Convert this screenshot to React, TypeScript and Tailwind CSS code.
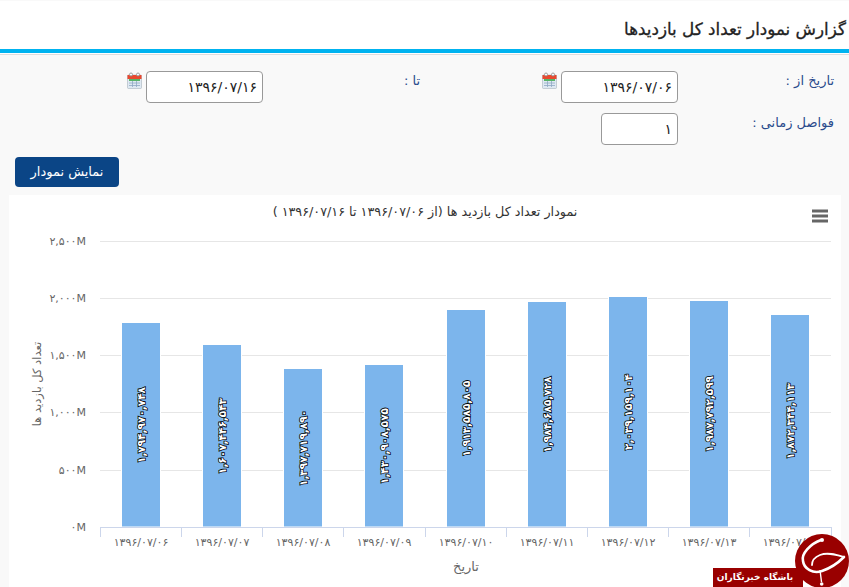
const font = { fontFamily: '"DejaVu Sans", sans-serif' };

const bars = [
  { x: 113, top: 323, value: "۱,۷۹۴,۹۷۰,۷۴۸", date: "۱۳۹۶/۰۷/۰۶" },
  { x: 194, top: 345, value: "۱,۶۰۷,۴۴۶,۵۴۳", date: "۱۳۹۶/۰۷/۰۷" },
  { x: 275, top: 369, value: "۱,۳۹۷,۷۱۹,۸۹۰", date: "۱۳۹۶/۰۷/۰۸" },
  { x: 356, top: 365, value: "۱,۴۳۰,۹۰۸,۵۷۵", date: "۱۳۹۶/۰۷/۰۹" },
  { x: 438, top: 310, value: "۱,۹۱۳,۵۸۵,۸۰۵", date: "۱۳۹۶/۰۷/۱۰" },
  { x: 519, top: 302, value: "۱,۹۸۴,۶۸۵,۷۲۸", date: "۱۳۹۶/۰۷/۱۱" },
  { x: 600, top: 297, value: "۲,۰۳۹,۱۵۹,۱۰۴", date: "۱۳۹۶/۰۷/۱۲" },
  { x: 681, top: 301, value: "۱,۹۸۷,۷۹۲,۵۹۹", date: "۱۳۹۶/۰۷/۱۳" },
  { x: 762, top: 315, value: "۱,۸۷۲,۳۴۴,۱۱۳", date: "۱۳۹۶/۰۷/۱۴" },
];

const ticks = [
  { y: 46, label: "۲,۵۰۰M" },
  { y: 103, label: "۲,۰۰۰M" },
  { y: 160, label: "۱,۵۰۰M" },
  { y: 217, label: "۱,۰۰۰M" },
  { y: 275, label: "۵۰۰M" },
  { y: 332, label: "۰M" },
];

function CalendarIcon() {
  return (
    <svg width="15" height="17" viewBox="0 0 15 17" className="shrink-0">
      <rect x="0.5" y="3" width="14" height="13.5" rx="1" fill="#dfe9f2" stroke="#9aa7b3" strokeWidth="0.5" />
      <rect x="0.5" y="3" width="14" height="4" fill="#e8492f" />
      <rect x="2" y="7" width="11" height="2" fill="#58b368" />
      <path d="M2 11h11M2 13.5h11M5.5 9v6M9.5 9v6" stroke="#8fa8c4" strokeWidth="0.8" />
      <circle cx="4" cy="2.5" r="1.5" fill="#fff" stroke="#8a8a8a" strokeWidth="0.8" />
      <circle cx="11" cy="2.5" r="1.5" fill="#fff" stroke="#8a8a8a" strokeWidth="0.8" />
    </svg>
  );
}

function DateField({ value }: { value: string }) {
  return (
    <div className="flex items-start gap-[4px]">
      <input
        readOnly
        value={value}
        dir="rtl"
        className="h-[32px] w-[117px] rounded-[4px] border border-[#999999] bg-white px-[5px] text-[14px] text-[#222222] outline-none"
        style={font}
      />
      <div className="pt-[1px]">
        <CalendarIcon />
      </div>
    </div>
  );
}

function Chart() {
  return (
    <svg width="832" height="392" viewBox="0 0 832 392" className="block" style={font}>
      <text x="416" y="21" textAnchor="middle" direction="rtl" fontSize="12.75" fill="#333333">
        نمودار تعداد کل بازدید ها (از ۱۳۹۶/۰۷/۰۶ تا ۱۳۹۶/۰۷/۱۶ )
      </text>
      <path d="M803 16h16M803 21h16M803 26h16" stroke="#666666" strokeWidth="3" />

      {ticks.slice(0, 5).map((t) => (
        <line key={t.y} x1="91" x2="822" y1={t.y + 0.5} y2={t.y + 0.5} stroke="#e6e6e6" />
      ))}
      {ticks.map((t) => (
        <text key={t.label} x="77" y={t.y + 4} textAnchor="end" fontSize="11" fill="#666666">
          {t.label}
        </text>
      ))}

      {bars.map((b) => {
        const top = b.top - 195;
        const center = (top + 332) / 2;
        return (
          <g key={b.date}>
            <rect x={b.x - 0.5} y={top - 0.5} width="39" height={332 - top + 0.5} fill="#7cb5ec" stroke="#ffffff" />
            <text
              x={b.x + 19}
              y={center}
              textAnchor="middle"
              fontSize="10.5"
              fontWeight="700"
              fill="#ffffff"
              stroke="#000000"
              strokeWidth="1.6"
              transform={`rotate(-90 ${b.x + 19} ${center}) translate(0 4)`}
              style={{ paintOrder: "stroke" }}
            >
              {b.value}
            </text>
          </g>
        );
      })}

      <line x1="91" x2="822" y1="332.5" y2="332.5" stroke="#ccd6eb" />
      {[91, 172, 253, 334, 416, 497, 578, 659, 740, 822].map((x) => (
        <line key={x} x1={x + 0.5} x2={x + 0.5} y1="332" y2="342" stroke="#ccd6eb" />
      ))}
      {bars.map((b) => (
        <text key={b.date} x={b.x + 19} y="351" textAnchor="middle" fontSize="11" fill="#666666">
          {b.date}
        </text>
      ))}

      <text x="457" y="376" textAnchor="middle" direction="rtl" fontSize="13" fill="#666666">
        تاریخ
      </text>
      <text x="0" y="0" textAnchor="middle" direction="rtl" fontSize="11.5" fill="#666666" transform="translate(32 189) rotate(-90)">
        تعداد کل بازدید ها
      </text>
    </svg>
  );
}

function Watermark() {
  return (
    <div className="pointer-events-none absolute bottom-0 right-0 h-[60px] w-[136px]">
      <div className="absolute bottom-0 left-0 flex h-[19px] w-[90px] items-center justify-center bg-[#990000]">
        <span dir="rtl" className="pr-[6px] text-[9px] font-bold text-white" style={font}>
          باشگاه خبرنگاران
        </span>
      </div>
      <svg width="54" height="54" viewBox="0 0 54 54" className="absolute right-0 top-[7px]">
        <circle cx="27" cy="27" r="27" fill="#990000" />
        <path
          d="M26 6C15 10 6 20 8 27C9 35 18 40 27 37C36 34 42 30 49 23"
          fill="none"
          stroke="#ffffff"
          strokeWidth="2.6"
          strokeLinecap="round"
        />
        <path
          d="M49 23C42 21 33 18 25 21C20 23 17 27 17 31"
          fill="none"
          stroke="#ffffff"
          strokeWidth="1.8"
          strokeLinecap="round"
        />
        <path d="M25 36L26.5 48" fill="none" stroke="#ffffff" strokeWidth="1.4" />
        <circle cx="27" cy="6" r="2" fill="#ffffff" />
        <circle cx="26.7" cy="50" r="1.8" fill="#ffffff" />
      </svg>
    </div>
  );
}

export default function App() {
  return (
    <div className="relative h-[587px] w-[849px] overflow-hidden bg-[#f9f9f9]" style={font}>
      <header className="mt-[1px] flex h-[48px] items-center justify-end bg-white pr-[3px] pt-[10px]">
        <h1 dir="rtl" className="text-[16.75px] font-normal text-[#222222] [-webkit-text-stroke:0.3px_#222222]">
          گزارش نمودار تعداد کل بازدیدها
        </h1>
      </header>
      <div className="h-[4px] bg-[#00b3f0]" />
      <div className="h-[1px] bg-white" />
      <div className="h-[1px] bg-[#dddddd]" />

      <form dir="rtl" className="px-[15px] pt-[16px] text-[13px] text-[#2a4a8c]">
        <div className="flex h-[42px] items-start">
          <label className="w-[156px]">تاریخ از :</label>
          <div className="w-[258px]">
            <DateField value="۱۳۹۶/۰۷/۰۶" />
          </div>
          <label className="w-[157px]">تا :</label>
          <DateField value="۱۳۹۶/۰۷/۱۶" />
        </div>
        <div className="flex h-[44px] items-start">
          <label className="w-[156px]">فواصل زمانی :</label>
          <input
            readOnly
            value="۱"
            dir="rtl"
            className="h-[32px] w-[77px] rounded-[4px] border border-[#999999] bg-white px-[5px] text-[14px] text-[#222222] outline-none"
            style={font}
          />
        </div>
      </form>

      <div className="pl-[15px]">
        <button className="h-[30px] w-[104px] rounded-[4px] bg-[#0b4586] text-[13px] text-white" dir="rtl">
          نمایش نمودار
        </button>
      </div>

      <section className="ml-[9px] mt-[8px] w-[832px] bg-white">
        <Chart />
      </section>

      <Watermark />
    </div>
  );
}
